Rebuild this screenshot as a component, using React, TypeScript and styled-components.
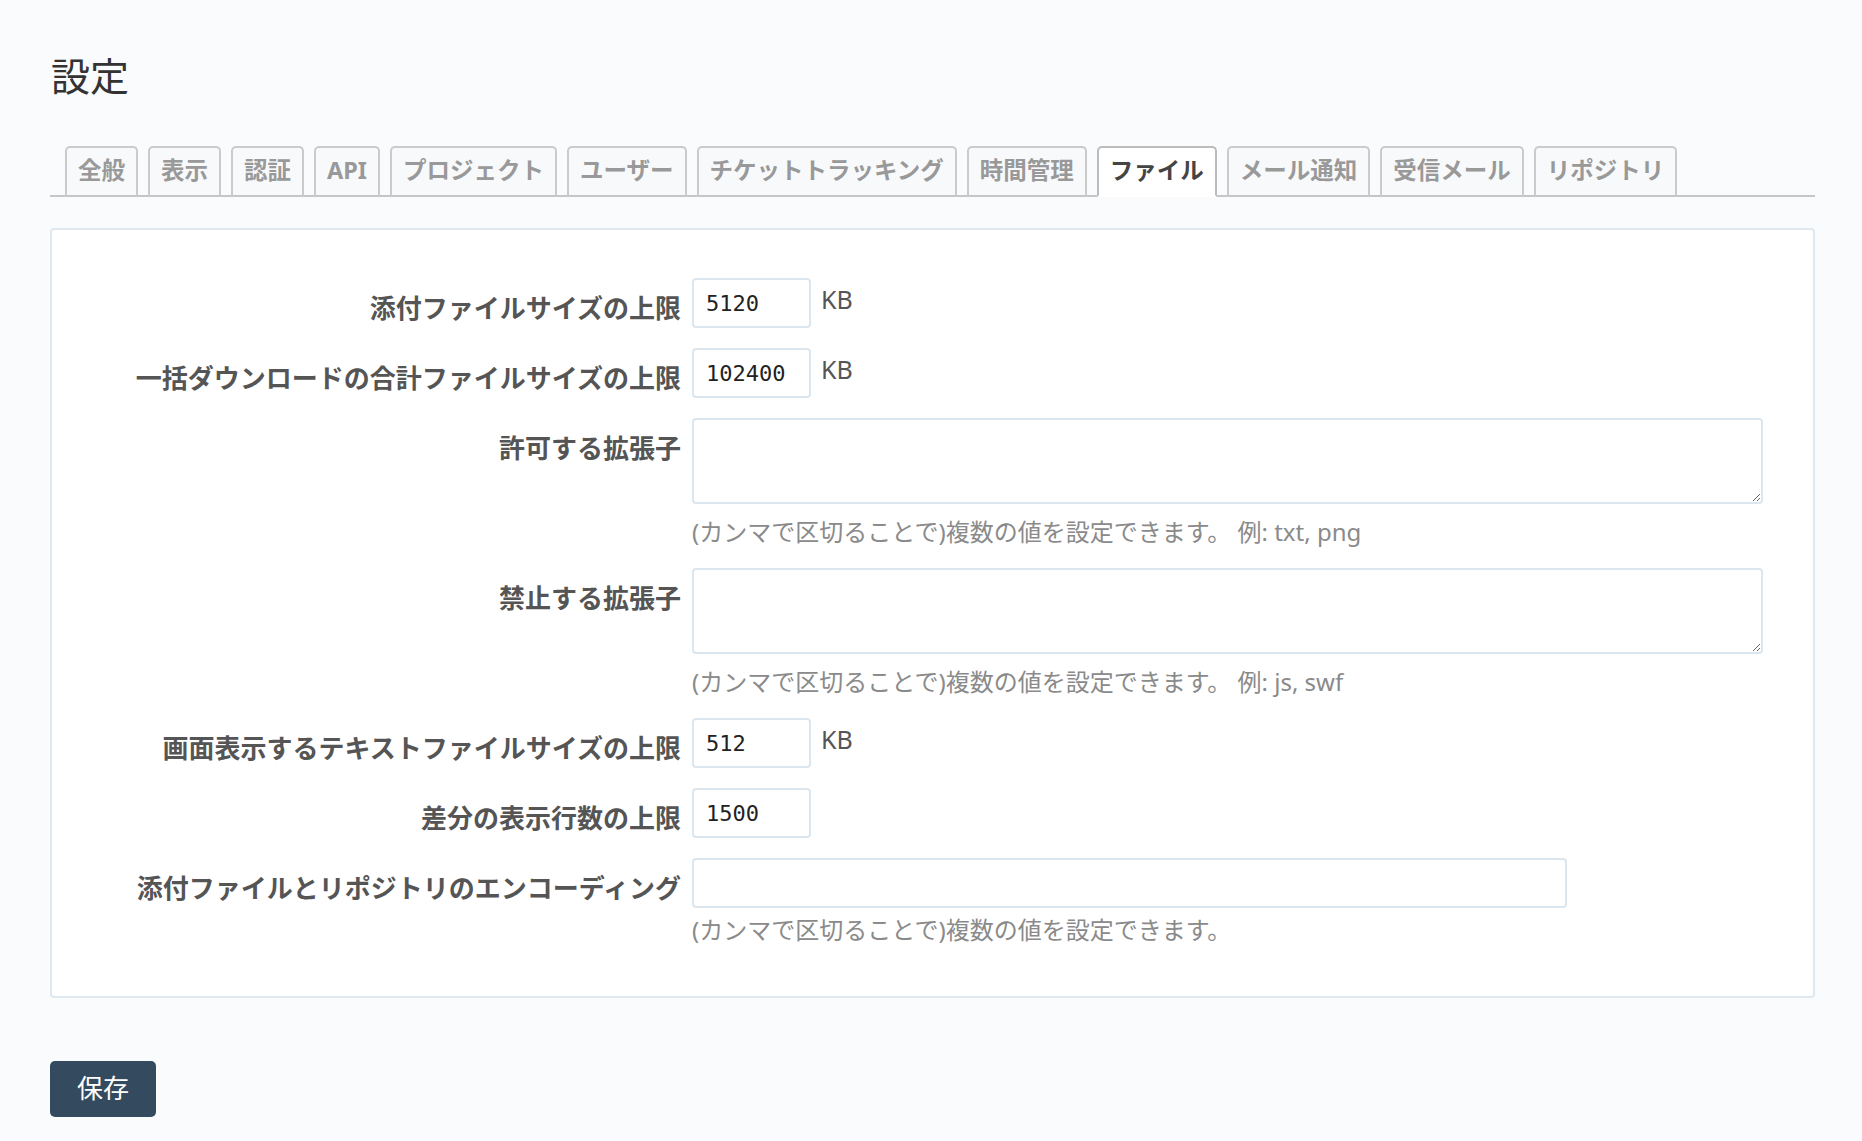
import React from "react";
import styled, { createGlobalStyle } from "styled-components";

const GlobalStyle = createGlobalStyle`
  html, body { margin: 0; padding: 0; }
  body {
    background: #f9fbfd;
    font-family: "Noto Sans CJK JP", "Noto Sans", sans-serif;
    color: #333;
  }
`;

const Page = styled.div`
  padding: 49px 47px 40px 50px;
`;

const Title = styled.h2`
  margin: 0 0 0 1px;
  font-size: 39px;
  line-height: 50px;
  font-weight: 400;
  color: #333;
`;

const TabBar = styled.ul`
  list-style: none;
  margin: 47px 0 0 0;
  padding: 0 0 0 15px;
  display: flex;
  gap: 10px;
  border-bottom: 2px solid #c6c6c6;
  height: 49px;
`;

const Tab = styled.li<{ $active?: boolean }>`
  box-sizing: border-box;
  height: 51px;
  margin-bottom: -2px;
  padding: 0 11px;
  font-family: "Noto Sans", "Noto Sans CJK JP", sans-serif;
  font-size: 23.5px;
  font-weight: 700;
  line-height: 44px;
  white-space: nowrap;
  border: 2px solid ${(p) => (p.$active ? "#bcbcbc" : "#cbcbcb")};
  border-bottom-color: ${(p) => (p.$active ? "#ffffff" : "#c6c6c6")};
  border-radius: 5px 5px 0 0;
  background: ${(p) => (p.$active ? "#ffffff" : "#f8f9fb")};
  color: ${(p) => (p.$active ? "#444" : "#999")};
`;

const Panel = styled.div`
  margin-top: 31px;
  background: #fff;
  border: 2px solid #dfe7ef;
  border-radius: 4px;
  padding: 48px 49px 50px 0;
  display: flex;
  flex-direction: column;
  gap: 20px;
`;

const Row = styled.div`
  display: grid;
  grid-template-columns: 629px 1fr;
  column-gap: 11px;
  align-items: start;
`;

const Label = styled.label`
  text-align: right;
  font-size: 26px;
  font-weight: 700;
  line-height: 36px;
  padding-top: 11px;
  color: #555;
  white-space: nowrap;
`;

const Field = styled.div`
  display: flex;
  flex-direction: column;
`;

const FieldLine = styled.div`
  display: flex;
  align-items: flex-start;
  gap: 10px;
`;

const TextInput = styled.input<{ $width: number }>`
  box-sizing: border-box;
  width: ${(p) => p.$width}px;
  height: 50px;
  border: 2px solid #dce6ef;
  border-radius: 4px;
  padding: 0 12px;
  font-family: "DejaVu Sans Mono", "Liberation Mono", monospace;
  font-size: 22px;
  color: #222;
  background: #fff;
  outline: none;
`;

const TextArea = styled.textarea`
  display: block;
  box-sizing: border-box;
  width: 1071px;
  height: 86px;
  border: 2px solid #dce6ef;
  border-radius: 4px;
  padding: 8px 12px;
  font-family: "DejaVu Sans Mono", "Liberation Mono", monospace;
  font-size: 20px;
  background: #fff;
  outline: none;
`;

const Unit = styled.span`
  font-family: "Noto Sans", "Noto Sans CJK JP", sans-serif;
  font-size: 25px;
  line-height: 32px;
  padding-top: 5px;
  color: #555;
`;

const Hint = styled.div<{ $gap: number }>`
  margin-top: ${(p) => p.$gap}px;
  font-family: "Noto Sans", "Noto Sans CJK JP", sans-serif;
  font-size: 24px;
  line-height: 32px;
  color: #8a8a8a;
  white-space: nowrap;
`;

const SaveButton = styled.button`
  margin-top: 63px;
  width: 106px;
  height: 56px;
  border: none;
  border-radius: 5px;
  background: #344a5e;
  color: #fff;
  font-family: "Noto Sans CJK JP", sans-serif;
  font-size: 26px;
  line-height: 52px;
  padding: 0 0 4px;
  cursor: pointer;
`;

const tabs = [
  "全般",
  "表示",
  "認証",
  "API",
  "プロジェクト",
  "ユーザー",
  "チケットトラッキング",
  "時間管理",
  "ファイル",
  "メール通知",
  "受信メール",
  "リポジトリ",
];

const HINT = "(カンマで区切ることで)複数の値を設定できます。";

export default function App() {
  return (
    <>
      <GlobalStyle />
      <Page>
        <Title>設定</Title>
        <TabBar>
          {tabs.map((t) => (
            <Tab key={t} $active={t === "ファイル"}>
              {t}
            </Tab>
          ))}
        </TabBar>
        <Panel>
          <Row>
            <Label>添付ファイルサイズの上限</Label>
            <FieldLine>
              <TextInput $width={119} defaultValue="5120" />
              <Unit>KB</Unit>
            </FieldLine>
          </Row>
          <Row>
            <Label>一括ダウンロードの合計ファイルサイズの上限</Label>
            <FieldLine>
              <TextInput $width={119} defaultValue="102400" />
              <Unit>KB</Unit>
            </FieldLine>
          </Row>
          <Row>
            <Label>許可する拡張子</Label>
            <Field>
              <TextArea />
              <Hint $gap={12}>{HINT} 例: txt, png</Hint>
            </Field>
          </Row>
          <Row>
            <Label>禁止する拡張子</Label>
            <Field>
              <TextArea />
              <Hint $gap={12}>{HINT} 例: js, swf</Hint>
            </Field>
          </Row>
          <Row>
            <Label>画面表示するテキストファイルサイズの上限</Label>
            <FieldLine>
              <TextInput $width={119} defaultValue="512" />
              <Unit>KB</Unit>
            </FieldLine>
          </Row>
          <Row>
            <Label>差分の表示行数の上限</Label>
            <FieldLine>
              <TextInput $width={119} defaultValue="1500" />
            </FieldLine>
          </Row>
          <Row>
            <Label>添付ファイルとリポジトリのエンコーディング</Label>
            <Field>
              <TextInput $width={875} defaultValue="" />
              <Hint $gap={6}>{HINT}</Hint>
            </Field>
          </Row>
        </Panel>
        <SaveButton>保存</SaveButton>
      </Page>
    </>
  );
}
